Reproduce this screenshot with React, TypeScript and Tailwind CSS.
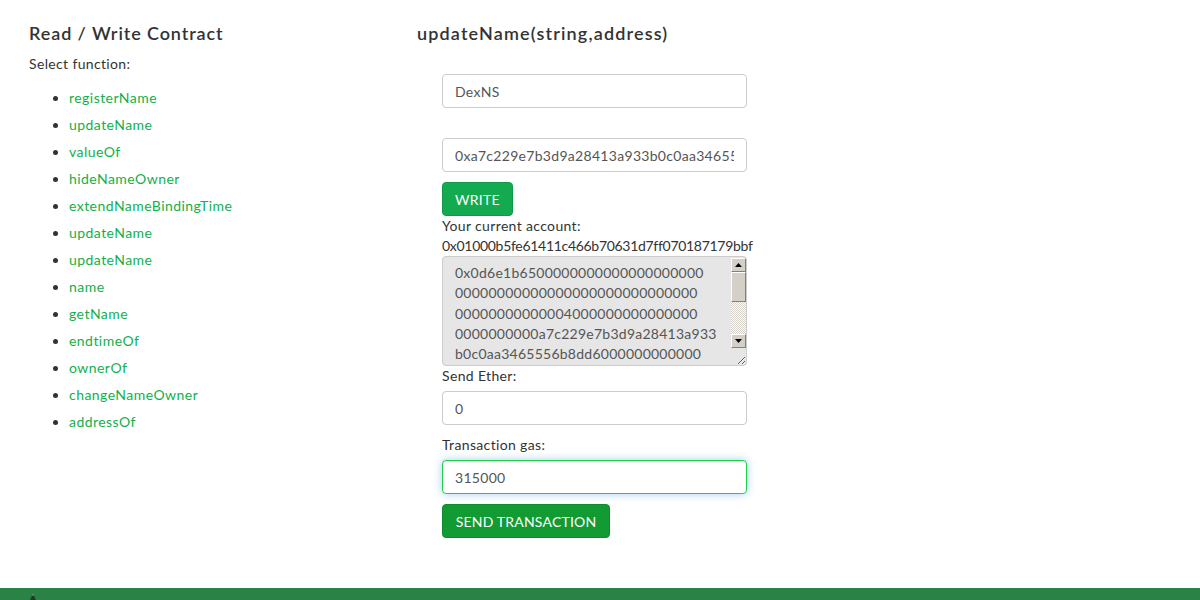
import type { FC } from "react";

const functions = [
  "registerName",
  "updateName",
  "valueOf",
  "hideNameOwner",
  "extendNameBindingTime",
  "updateName",
  "updateName",
  "name",
  "getName",
  "endtimeOf",
  "ownerOf",
  "changeNameOwner",
  "addressOf",
];

// encoded call data, split the way the field wraps it
const callData = [
  "0x0d6e1b65" + "0".repeat(20),
  "0".repeat(29),
  "0".repeat(13) + "40" + "0".repeat(14),
  "0".repeat(10) + "a7c229e7b3d9a28413a933",
  "b0c0aa3465556b8dd6" + "0".repeat(12),
  "0".repeat(29),
  "00000000000000000000054465784",
  "e53" + "0".repeat(26),
  "0".repeat(25),
].join("\n");

const inputBase =
  "block h-[34px] w-[305px] rounded-[4px] border bg-white px-3 text-[14px] tracking-[0.3px] text-[#555] outline-none";

const labelText = "text-[14px] leading-[20px] tracking-[0.35px] text-[#333]";

const ScrollArrow: FC<{ up?: boolean }> = ({ up }) => (
  <div className="flex h-[14px] items-center justify-center border border-t-white border-l-white border-r-[#808080] border-b-[#808080] bg-[#d4d0c8]">
    <svg width="7" height="4" viewBox="0 0 7 4">
      <polygon points={up ? "3.5,0 7,4 0,4" : "0,0 7,0 3.5,4"} fill="#000" />
    </svg>
  </div>
);

const FunctionList: FC = () => (
  <div className="w-[417px] shrink-0 pl-[29px] pt-[23px]">
    <h2 className="text-[18px] font-semibold leading-[20px] tracking-[0.9px] text-[#333]">
      Read / Write Contract
    </h2>
    <p className={`mt-[11px] ${labelText}`}>Select function:</p>
    <ul className="mt-[10px] list-disc pl-10 text-[14px] leading-[27px] tracking-[0.45px] text-[#333]">
      {functions.map((fn, i) => (
        <li key={`${fn}-${i}`}>
          <a href="#" className="text-[#12b04c] hover:underline">
            {fn}
          </a>
        </li>
      ))}
    </ul>
  </div>
);

const WriteForm: FC = () => (
  <div className="pt-[23px]">
    <h2 className="text-[18px] font-semibold leading-[20px] tracking-[1.15px] text-[#333]">
      updateName(string,address)
    </h2>
    <div className="ml-[25px] mt-[31px] flex flex-col">
      <input className={`${inputBase} border-[#ccc]`} defaultValue="DexNS" />
      <input
        className={`${inputBase} mt-[30px] border-[#ccc]`}
        defaultValue="0xa7c229e7b3d9a28413a933b0c0aa3465556b8dd6"
      />
      <button className="mt-[10px] h-[34px] w-[71px] rounded-[4px] border border-[#119a45] bg-[#14aa50] text-[14px] tracking-[0.3px] text-white">
        WRITE
      </button>
      <p className={labelText}>Your current account:</p>
      <p className="text-[14px] leading-[20px] tracking-[-0.3px] text-[#333]">
        0x01000b5fe61411c466b70631d7ff070187179bbf
      </p>
      <div className="relative h-[110px] w-[305px]">
        <textarea
          readOnly
          wrap="off"
          className="block h-full w-full overflow-hidden rounded-[4px] border border-[#ccc] bg-[#e6e6e6] py-[6px] pl-3 pr-5 text-[14px] leading-[20.3px] tracking-[0.25px] text-[#555] outline-none"
          defaultValue={callData}
        />
        <div className="absolute right-[1px] top-[2px] flex h-[90px] w-[15px] flex-col">
          <ScrollArrow up />
          <div className="h-[30px] border border-t-white border-l-white border-r-[#808080] border-b-[#808080] bg-[#d4d0c8]" />
          <div className="flex-1 bg-[repeating-conic-gradient(#d4d0c8_0_25%,#ffffff_0_50%)] bg-[length:2px_2px]" />
          <ScrollArrow />
        </div>
      </div>
      <label className={labelText}>Send Ether:</label>
      <input className={`${inputBase} mt-[5px] border-[#ccc]`} defaultValue="0" />
      <label className={`mt-[10px] ${labelText}`}>Transaction gas:</label>
      <input
        className={`${inputBase} mt-[5px] border-[#22cf48] shadow-[inset_0_1px_1px_rgba(0,0,0,0.075),0_0_8px_rgba(102,175,233,0.6)]`}
        defaultValue="315000"
      />
      <button className="mt-[10px] h-[34px] w-[168px] rounded-[4px] border border-[#0f8a2c] bg-[#129a33] text-[14px] tracking-[0.2px] text-white">
        SEND TRANSACTION
      </button>
    </div>
  </div>
);

export default function App() {
  return (
    <div className="flex h-[600px] w-full flex-col overflow-hidden bg-white font-['Lato','Open_Sans',sans-serif]">
      <main className="flex h-[588px] shrink-0">
        <FunctionList />
        <WriteForm />
      </main>
      <footer className="relative h-[40px] shrink-0 bg-[#2a8246]">
        <svg
          className="absolute left-[28px] top-[5px]"
          width="10"
          height="12"
          viewBox="0 0 10 12"
        >
          <polygon points="5,0 10,12 0,12" fill="#1d3b25" />
          <polygon points="5,0 6,2.5 4,2.5" fill="#4fd07a" />
        </svg>
      </footer>
    </div>
  );
}
